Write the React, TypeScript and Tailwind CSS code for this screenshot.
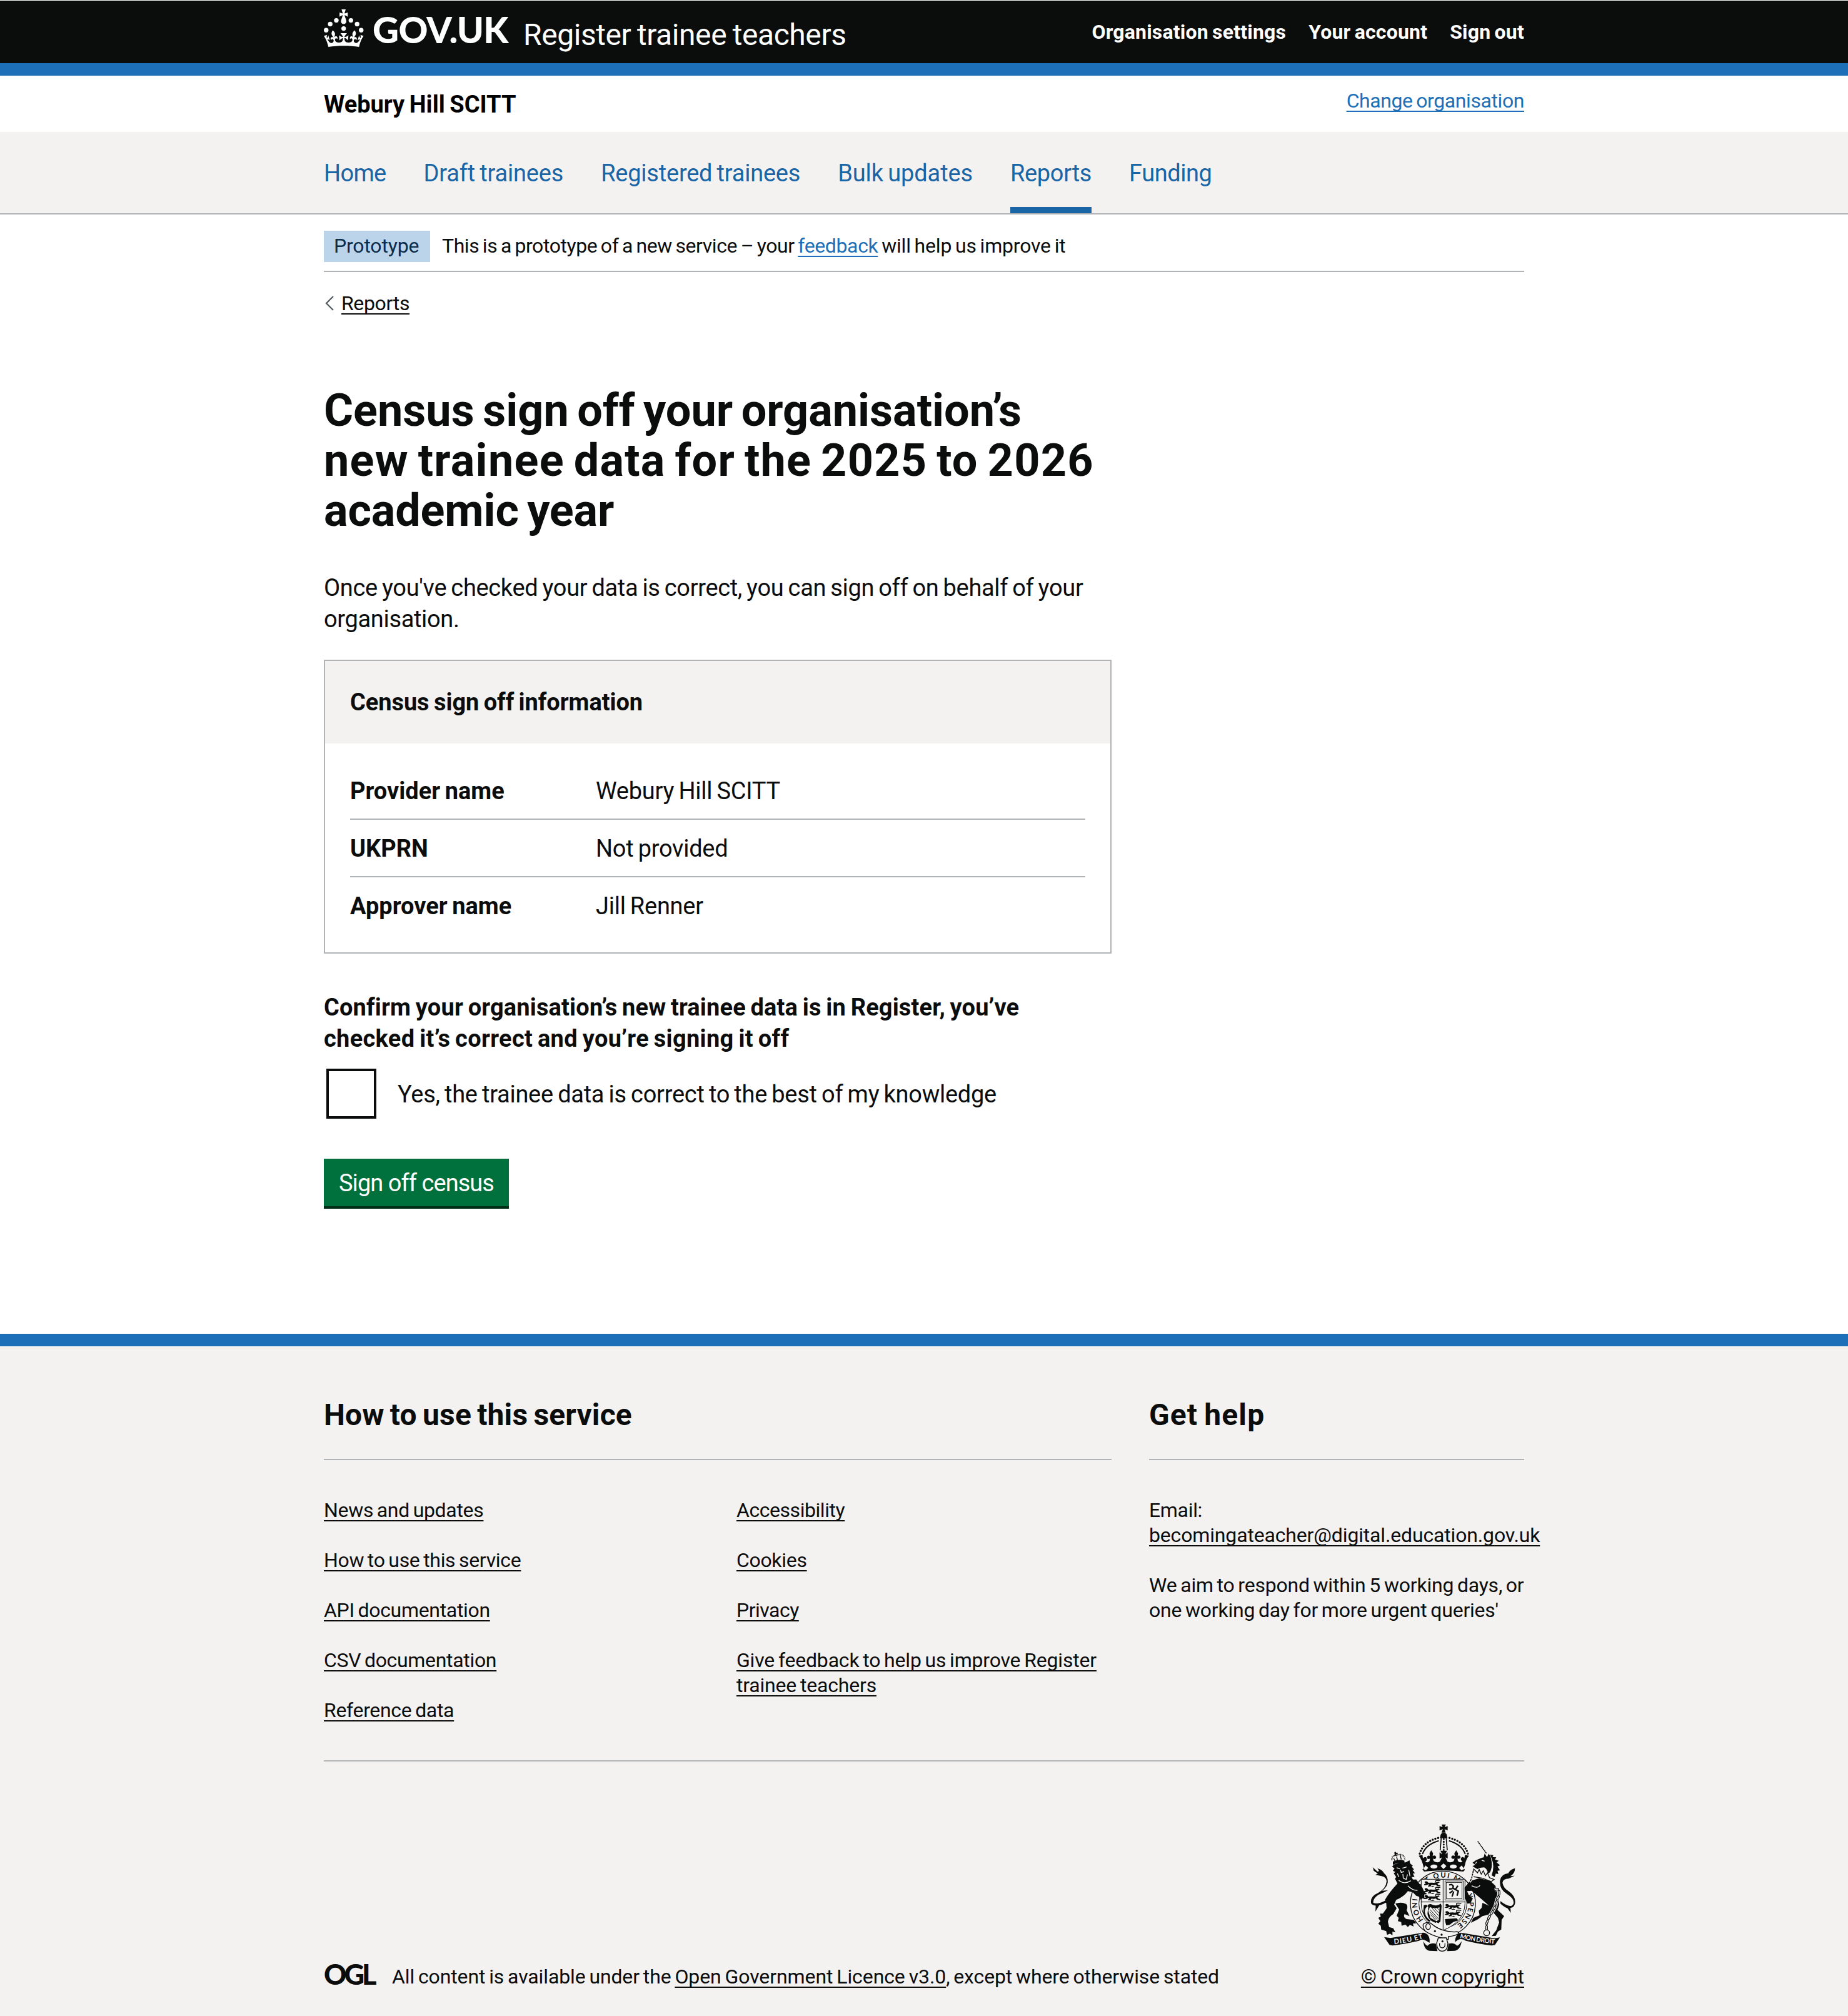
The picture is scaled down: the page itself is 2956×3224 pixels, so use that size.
import type { ReactNode } from "react";

const LINK = "underline decoration-[2px] underline-offset-[5px] [text-decoration-skip-ink:none]";

function Crown() {
  return (
    <svg viewBox="0 0 64 60" className="mt-[14px] h-[60px] w-[64px] shrink-0 fill-white" aria-hidden="true">
      <circle cx="20" cy="17.6" r="3.7" />
      <circle cx="10.2" cy="23.5" r="3.7" />
      <circle cx="3.7" cy="33.2" r="3.7" />
      <circle cx="31.7" cy="30.6" r="3.7" />
      <circle cx="43.3" cy="17.6" r="3.7" />
      <circle cx="53.2" cy="23.5" r="3.7" />
      <circle cx="59.7" cy="33.2" r="3.7" />
      <path d="M33.1,9.8c.2-.1.3-.3.5-.5l4.6,2.4v-6.8l-4.6,1.5c-.1-.2-.3-.3-.5-.5l1.9-5.9h-6.7l1.9,5.9c-.2.1-.3.3-.5.5l-4.6-1.5v6.8l4.6-2.4c.1.2.3.3.5.5l-2.6,8c-.9,2.8,1.2,5.7,4.1,5.7h0c3,0,5.1-2.9,4.1-5.7l-2.6-8ZM37,37.9s-3.4,3.8-4.1,6.1c2.2,0,4.2-.5,6.4-2.8l-.7,8.5c-2-2.8-4.4-4.1-5.7-3.8.1,3.1.5,6.7,5.8,7.2,3.7.3,6.7-1.5,7-3.8.4-2.6-2-4.3-3.7-1.6-1.4-4.5,2.4-6.1,4.9-3.2-1.9-4.5-1.8-7.7,2.4-10.9,3,4,2.6,7.3-1.2,11.1,2.4-1.3,6.2,0,4,4.6-1.2-2.8-3.7-2.2-4.2.2-.3,1.7.7,3.7,3,4.2,1.9.3,4.7-.9,7-5.9-1.3,0-2.4.7-3.9,1.7l2.4-8c.6,2.3,1.4,3.7,2.2,4.5.6-1.6.5-2.8,0-5.3l5,1.8c-2.6,3.6-5.2,8.7-7.3,17.5-7.4-1.1-15.7-1.7-24.5-1.7h0c-8.8,0-17.1.6-24.5,1.7-2.1-8.9-4.7-13.9-7.3-17.5l5-1.8c-.5,2.5-.6,3.7,0,5.3.8-.8,1.6-2.3,2.2-4.5l2.4,8c-1.5-1-2.6-1.7-3.9-1.7,2.3,5,5.2,6.2,7,5.9,2.3-.4,3.3-2.4,3-4.2-.5-2.4-3-3.1-4.2-.2-2.2-4.6,1.6-6,4-4.6-3.7-3.7-4.2-7.1-1.2-11.1,4.2,3.2,4.3,6.4,2.4,10.9,2.5-2.8,6.3-1.3,4.9,3.2-1.8-2.7-4.1-1-3.7,1.6.3,2.3,3.3,4.1,7,3.8,5.4-.5,5.7-4.2,5.8-7.2-1.3-.2-3.7,1-5.7,3.8l-.7-8.5c2.2,2.3,4.2,2.7,6.4,2.8-.7-2.3-4.1-6.1-4.1-6.1h10.6Z" />
    </svg>
  );
}

/* Small walking lion used in the quarters of the shield. */
function PassantLion({ x, y }: { x: number; y: number }) {
  return (
    <g transform={`translate(${x} ${y})`}>
      <path d="M4 3 Q10 -3 17 1 L23 7 Q36 5 50 7 L66 3 Q74 0 76 6 Q70 9 66 9 L68 16 L80 20 L80 24 L64 22 L58 16 Q46 20 38 16 L32 24 L20 25 L20 21 L27 18 L24 14 L12 19 L2 18 L2 14 L12 11 L6 9 Z" />
      <path d="M60 6 Q52 -4 64 -5 Q74 -5 80 -3" fill="none" stroke="#0b0c0c" strokeWidth="4" />
      <path d="M30 27 L44 22 L52 27 Z" />
    </g>
  );
}

function RoyalArms() {
  const ink = "#0b0c0c";
  const paper = "#f3f2f1";
  return (
    <svg viewBox="126 80 696 612" className="h-[204px] w-[232px]" fill={ink} aria-hidden="true">
      <defs>
        <path id="garter" d="M380 540 A123.4 123.4 0 1 1 530 570" />
        <path id="scrollLeft" d="M240 655 Q310 650 384 627" />
        <path id="scrollRight" d="M555 627 Q630 646 726 655" />
      </defs>

      {/* garter */}
      <ellipse cx="474" cy="462" rx="156" ry="156" fill={paper} stroke={ink} strokeWidth="4" />
      <ellipse cx="474" cy="462" rx="115" ry="116" fill="none" stroke={ink} strokeWidth="3" />
      <text fontFamily="Lato, sans-serif" fontSize="34" fontWeight="700">
        <textPath href="#garter" textLength="596">HONI SOIT QUI MAL Y PENSE</textPath>
      </text>

      {/* shield */}
      <path d="M370 345 H580 V462 Q578 548 475 590 Q372 548 370 462 Z" fill={paper} stroke={ink} strokeWidth="3" />
      <path d="M475 345 V588 M370 454 H580" fill="none" stroke={ink} strokeWidth="3" />
      <PassantLion x={382} y={355} />
      <PassantLion x={382} y={388} />
      <PassantLion x={382} y={421} />
      <PassantLion x={482} y={464} />
      <PassantLion x={482} y={498} />
      <path d="M484 536 L540 532 L548 542 L524 550 L506 564 L490 566 L486 550 Z" />
      <rect x="484" y="353" width="88" height="92" fill="none" stroke={ink} strokeWidth="2.5" />
      <rect x="490" y="360" width="76" height="78" fill="none" stroke={ink} strokeWidth="2.5" />
      <path d="M504 372 L516 370 L524 378 L522 388 L534 394 L546 376 M534 394 L548 402 L542 424 M520 390 L504 392 M522 400 L506 412 M526 404 L518 428" fill="none" stroke={ink} strokeWidth="7" />
      <path d="M382 470 Q396 464 402 474 Q384 486 388 506 Q392 530 416 544 L406 548 Q384 532 380 506 Z" />
      <path d="M404 480 Q396 464 416 464 Q446 478 464 462 L468 472 L462 548 L452 556 L440 548 L454 540 L458 480 Q430 488 412 478 L404 496 L414 530 L446 548 L440 554 Q402 542 400 508 Z" />
      <path d="M412 490 L452 534 M410 500 L448 540 M414 514 L440 542 M422 484 L454 520 M434 484 L456 508 M446 482 L457 494" fill="none" stroke={ink} strokeWidth="3" />

      {/* belt and buckle */}
      <path d="M380 560 Q400 544 424 562 Q460 594 530 598 Q548 594 552 604 Q536 616 500 620 L500 634 Q420 618 388 592 Q376 576 380 560 Z" fill={paper} stroke={ink} strokeWidth="4" />
      <ellipse cx="403" cy="572" rx="11" ry="14" fill="none" stroke={ink} strokeWidth="4" />
      <circle cx="436" cy="594" r="5" />
      <circle cx="468" cy="611" r="5" />
      <path d="M452 626 H490 L498 652 Q496 690 470 690 Q446 688 444 652 Z" fill={paper} stroke={ink} strokeWidth="4" />
      <path d="M458 652 Q456 674 471 674 Q486 674 484 652" fill="none" stroke={ink} strokeWidth="4" />
      <circle cx="472" cy="643" r="5" />

      {/* motto scroll */}
      <path d="M192 622 L222 627 L380 601 Q414 606 410 650 L394 640 Q372 628 360 640 Q290 656 232 663 L218 660 Q206 642 192 622 Z" />
      <path d="M748 624 L722 628 L560 601 Q532 610 532 646 L546 636 Q566 626 584 640 Q650 656 708 663 L724 660 Q736 642 748 624 Z" />
      <path d="M380 642 Q384 686 410 688 L448 690 L440 654 Q414 648 400 664 Q390 662 380 642 Z" />
      <path d="M564 642 Q558 684 532 688 L494 690 L502 654 Q528 648 542 664 Q552 662 564 642 Z" />
      <text fontFamily="Lato, sans-serif" fontSize="33" fontWeight="700" fill={paper}>
        <textPath href="#scrollLeft" textLength="142">DIEU ET</textPath>
      </text>
      <text fontFamily="Lato, sans-serif" fontSize="31" fontWeight="700" fill={paper}>
        <textPath href="#scrollRight" textLength="170">MON DROIT</textPath>
      </text>

      {/* crown above the shield */}
      <path d="M468 82 H488 L482 95 L497 90 V111 L482 105 L487 121 H467 L474 105 L458 111 V90 L473 95 Z" />
      <path d="M462 137 A16 16 0 1 1 494 137 L496 148 H460 Z" />
      <path d="M363 222 Q380 164 454 146" fill="none" stroke={ink} strokeWidth="10" strokeLinecap="round" strokeDasharray="0.1 13.4" />
      <path d="M594 222 Q576 164 503 146" fill="none" stroke={ink} strokeWidth="10" strokeLinecap="round" strokeDasharray="0.1 13.4" />
      <path d="M376 224 Q392 178 454 160 M581 224 Q565 178 503 160" fill="none" stroke={ink} strokeWidth="6" />
      <path d="M466 148 L461 206 M490 148 L495 206" fill="none" stroke={ink} strokeWidth="5" />
      <path d="M478 152 V206" fill="none" stroke={ink} strokeWidth="9" strokeLinecap="round" strokeDasharray="0.1 13" />
      <path d="M358 232 L376 228 L378 244 Q392 232 396 244 Q400 256 388 260 Q402 268 410 258 L412 246 Q398 252 398 238 Q402 228 411 234 L410 220 L418 206 L427 220 L425 234 Q436 226 442 238 Q440 252 426 246 L430 258 Q446 268 460 260 L470 240 L458 246 V216 L471 226 L462 208 H494 L485 226 L497 216 V246 L486 240 L496 260 Q512 268 526 258 L530 246 Q516 250 514 238 Q520 226 531 234 L529 220 L538 206 L547 220 L545 234 Q556 226 559 240 Q556 250 544 246 L546 258 Q556 268 568 260 Q556 252 562 242 Q570 234 577 244 L580 228 L599 232 Q584 250 580 276 L574 292 L580 300 L572 308 Q477 298 384 308 L376 298 L382 290 Q374 250 358 232 Z" />
      <ellipse cx="431" cy="284" rx="17" ry="10" fill={paper} />
      <ellipse cx="524" cy="284" rx="17" ry="10" fill={paper} />
      <path d="M477 269 L491 282 L477 296 L463 282 Z M391 279 L404 291 L392 302 L380 296 Z M564 279 L577 296 L563 302 L552 291 Z" fill={paper} />

      {/* lion supporter */}
      <path d="M246 212 L250 218 L257 217 V224 L251 224 L252 232 L240 232 L243 224 L240 218 Z" />
      <path d="M229 254 Q228 230 247 232 Q284 214 292 250" fill="none" stroke={ink} strokeWidth="6" strokeDasharray="4 3" />
      <path d="M234 260 Q262 246 290 256 L288 270 Q262 262 234 276 Z" />
      <path d="M252 236 L256 254 M270 230 L274 250 M238 244 L244 258" fill="none" stroke={ink} strokeWidth="4" />
      <path d="M230 284 L240 274 Q268 262 296 264 L314 254 L316 268 L330 280 L324 284 L336 298 L328 300 L340 316 L330 318 L338 334 L324 334 L330 346 L346 346 L376 386 L384 404 L398 416 L384 418 L386 440 L376 436 L368 444 L358 428 L346 424 L330 408 L306 402 Q286 430 250 444 L240 466 L252 484 L236 512 Q214 524 210 548 L216 574 L236 580 L246 600 L232 596 L232 614 L220 606 L206 612 L202 594 L178 586 L176 568 L164 558 L174 546 L164 530 L176 524 L172 510 L186 510 L204 484 L202 458 L196 444 Q216 408 256 366 L244 342 L250 334 L238 316 L246 310 L234 304 L242 294 Z" />
      <path d="M246 462 Q274 452 298 464 Q308 472 300 494 L314 522 L290 512 Q282 528 300 536 L334 540 L346 556 L330 558 L334 572 L316 564 L306 574 L294 562 L276 568 L274 550 L258 546 L262 530 L252 520 L264 490 Z" />
      <path d="M204 456 Q150 484 130 462 Q122 428 164 410 Q202 388 204 354 Q202 334 180 330 L150 324 L162 318 L142 304 L138 288 L160 308 L168 306 L160 292 Q184 300 192 316 Q212 332 209 362 Q204 386 182 400 L210 398 Q184 412 164 420 Q138 438 140 458 Q160 468 200 446 Z" />
      <path d="M152 466 L172 464 L150 500 Z" />
      <path d="M252 290 L268 294 M280 292 L300 286 M270 300 L274 312 L288 308 M282 320 L284 340 L298 346 L304 322 M256 318 L262 334 M310 300 L316 330 M262 350 Q290 372 320 352 M306 376 Q330 400 352 398" fill="none" stroke={paper} strokeWidth="4" />

      {/* unicorn supporter */}
      <path d="M641 163 L684 222" fill="none" stroke={ink} strokeWidth="5" strokeDasharray="7 2" />
      <path d="M616 266 L632 254 L660 242 L670 240 L674 222 L686 238 L694 222 L704 240 L708 262 Q712 286 700 312 L690 318 Q688 296 672 288 L652 290 L640 296 L628 290 L616 282 L630 276 Z" />
      <path d="M700 226 L716 230 L712 238 L730 240 L724 250 L742 256 L732 264 L748 278 L736 284 L748 302 L736 304 L740 320 L728 318 L722 334 L708 326 Q724 284 708 246 Z" />
      <path d="M622 296 L640 314 L648 298 L658 320 L668 304 L678 328 L688 314 L698 338 L720 346 L706 356 L664 340 L616 332 Z" fill={paper} stroke={ink} strokeWidth="4" />
      <path d="M604 354 L648 340 L700 352 L724 374 L744 412 L744 468 L736 492 L768 522 L756 540 L754 586 L738 596 L728 616 L708 618 L730 590 L744 552 L738 530 L712 500 L700 476 Q660 440 612 400 L590 402 L600 424 L618 436 L606 460 L592 462 L580 434 L578 386 L590 370 Z" />
      <path d="M620 304 L612 340 L600 360" fill="none" stroke={paper} strokeWidth="14" />
      <path d="M620 304 L612 340 L600 366" fill="none" stroke={ink} strokeWidth="5" strokeDasharray="10 4" />
      <path d="M664 458 L700 474 L712 494 L694 514 L664 522 L640 538 L608 554 L620 530 L650 518 L646 496 L660 482 Z" />
      <path d="M750 450 Q800 488 812 464 Q820 440 782 416 Q744 392 748 352 Q752 320 788 316 Q796 298 820 292 Q820 316 798 330 L818 328 L790 342 Q762 342 760 362 Q764 388 792 404 Q826 430 820 462 Q814 484 798 482 L800 506 L784 484 Q766 478 750 462 Z" />
      <path d="M724 396 Q744 384 744 410 Q744 430 734 440 L726 474 L712 500 L694 530 L684 556 L684 588" fill="none" stroke={paper} strokeWidth="18" />
      <path d="M724 396 Q744 384 744 410 Q744 430 734 440 L726 474 L712 500 L694 530 L684 556 L684 588" fill="none" stroke={ink} strokeWidth="12" strokeLinecap="round" strokeDasharray="14 12" />
      <path d="M724 396 Q744 384 744 410 Q744 430 734 440 L726 474 L712 500 L694 530 L684 556 L684 588" fill="none" stroke={paper} strokeWidth="5" strokeLinecap="round" strokeDasharray="14 12" />
      <circle cx="684" cy="602" r="14" fill={paper} stroke={ink} strokeWidth="4" />
      <path d="M636 262 L630 270 M660 254 L674 258 M612 376 Q640 392 652 374" fill="none" stroke={paper} strokeWidth="4" />
    </svg>
  );
}

function FooterLink({ children, className = "tracking-[-0.01em]" }: { children: ReactNode; className?: string }) {
  return (
    <li>
      <a className={`${LINK} ${className}`}>{children}</a>
    </li>
  );
}

function SummaryRow({ label, value, last = false }: { label: string; value: string; last?: boolean }) {
  return (
    <div className={last ? "flex pt-[21px] pb-[19px]" : "flex border-b-[2px] border-[#b1b4b6] pt-[21px] pb-[19px]"}>
      <dt className="w-[393px] font-bold tracking-[0em]">{label}</dt>
      <dd className="tracking-[-0.007em]">{value}</dd>
    </div>
  );
}

const NAV = [
  { label: "Home", style: "tracking-[-0.018em]" },
  { label: "Draft trainees", style: "tracking-[-0.005em]" },
  { label: "Registered trainees", style: "tracking-[-0.006em]" },
  { label: "Bulk updates", style: "tracking-[-0.003em]" },
  { label: "Reports", style: "border-b-[10px] border-[#1a65a6] tracking-[-0.009em]" },
  { label: "Funding", style: "tracking-[-0.012em]" },
];

export default function App() {
  return (
    <div className="h-[3224px] bg-white pt-px font-['Roboto',sans-serif] text-[32px] leading-[40px] text-[#0b0c0c] [word-spacing:-0.06em]">
      <header>
        <div className="h-[100px] bg-[#0b0c0c] text-white">
          <div className="mx-auto flex w-[1920px] items-start">
            <Crown />
            <span className="mt-[16px] ml-[14px] w-[241px] font-['Lato',sans-serif] text-[58px] leading-[60px] font-black tracking-[-0.011em]">
              GOV.UK
            </span>
            <span className="mt-[25px] text-[48px] leading-[60px] tracking-[-0.009em]">Register trainee teachers</span>
            <nav className="mt-[30px] ml-auto flex gap-[36px] font-bold tracking-[0.006em]">
              <a>Organisation settings</a>
              <a>Your account</a>
              <a>Sign out</a>
            </nav>
          </div>
        </div>
        <div className="h-5 bg-[#1d70b8]" />
        <div className="mx-auto flex h-[90px] w-[1920px] items-start justify-between pt-5">
          <span className="mt-px text-[38px] leading-[50px] font-bold tracking-[0em] text-black">Webury Hill SCITT</span>
          <a className={`${LINK} tracking-[-0.013em] text-[#1d70b8]`}>Change organisation</a>
        </div>
        <div className="border-b-[2px] border-[#b1b4b6] bg-[#f3f2f1]">
          <nav className="mx-auto flex h-[130px] w-[1920px] gap-[60px] text-[38px] leading-[50px] text-[#1a65a6]">
            {NAV.map((item) => (
              <a key={item.label} className={`h-full pt-[41px] ${item.style}`}>
                {item.label}
              </a>
            ))}
          </nav>
        </div>
      </header>

      <div className="mx-auto w-[1920px]">
        <div className="flex h-[92px] items-start border-b-[2px] border-[#b1b4b6] pt-[26px] leading-[48px]">
          <strong className="h-[50px] w-[170px] bg-[#bbd4ea] pl-4 font-normal tracking-[-0.006em] text-[#0c2d4a]">Prototype</strong>
          <p className="ml-[19px] tracking-[-0.0135em]">
            This is a prototype of a new service – your{" "}
            <a className={`${LINK} tracking-[-0.012em] text-[#1d70b8]`}>feedback</a>
            <span className="tracking-[-0.006em]"> will help us improve it</span>
          </p>
        </div>
        <a className="mt-[30px] flex items-start">
          <svg viewBox="0 0 28 40" className="h-10 w-7" fill="none" stroke="#505a5f" strokeWidth="2.2" aria-hidden="true">
            <path d="M15 9 L4 20 L15 31" />
          </svg>
          <span className={`${LINK} tracking-[-0.011em]`}>Reports</span>
        </a>
      </div>

      <main className="mx-auto mt-[112px] w-[1920px] text-[38px] leading-[50px]">
        <div className="w-[1260px]">
          <h1 className="text-[72px] leading-[80px] font-bold whitespace-nowrap [word-spacing:-0.06em]">
            <span className="block tracking-[0em]">Census sign off your organisation’s</span>
            <span className="block tracking-[0.0175em]">new trainee data for the 2025 to 2026</span>
            <span className="block tracking-[-0.002em]">academic year</span>
          </h1>
          <p className="mt-[58px] tracking-[-0.009em]">
            Once you've checked your data is correct, you can sign off on behalf of your
            <br />
            organisation.
          </p>

          <section className="mt-[40px] border-[2px] border-[#b1b4b6]">
            <h2 className="h-[132px] bg-[#f3f2f1] px-10 pt-[41px] font-bold tracking-[-0.002em]">Census sign off information</h2>
            <dl className="px-10 py-[30px]">
              <SummaryRow label="Provider name" value="Webury Hill SCITT" />
              <SummaryRow label="UKPRN" value="Not provided" />
              <SummaryRow label="Approver name" value="Jill Renner" last />
            </dl>
          </section>

          <form>
            <p className="mt-[61px] font-bold">
              <span className="tracking-[0.004em]">Confirm your organisation’s new trainee data is in Register, you’ve</span>
              <br />
              <span className="tracking-[0.008em]">checked it’s correct and you’re signing it off</span>
            </p>
            <label className="mt-[23px] flex items-start">
              <span className="ml-1 h-20 w-20 border-[4px] border-[#0b0c0c] bg-white" />
              <span className="mt-4 ml-[34px] tracking-[-0.007em]">Yes, the trainee data is correct to the best of my knowledge</span>
            </label>
            <button
              type="button"
              className="mt-16 h-[80px] w-[296px] border-b-[4px] border-[#002d18] bg-[#00703c] pt-[2px] text-center tracking-[-0.025em] text-white"
            >
              Sign off census
            </button>
          </form>
        </div>
      </main>

      <footer className="mt-[200px] h-[1091px] border-t-[20px] border-[#1d70b8] bg-[#f3f2f1] pt-20">
        <div className="mx-auto w-[1920px]">
          <div className="flex gap-[60px] border-b-[2px] border-[#b1b4b6] pb-[60px]">
            <section className="w-[1260px]">
              <h2 className="border-b-[2px] border-[#b1b4b6] pb-10 text-[48px] leading-[60px] font-bold tracking-[0.003em] [word-spacing:-0.06em]">
                How to use this service
              </h2>
              <div className="mt-[60px] grid grid-cols-2 gap-[60px]">
                <ul className="flex flex-col gap-10">
                  <FooterLink>News and updates</FooterLink>
                  <FooterLink>How to use this service</FooterLink>
                  <FooterLink>API documentation</FooterLink>
                  <FooterLink>CSV documentation</FooterLink>
                  <FooterLink>Reference data</FooterLink>
                </ul>
                <ul className="flex flex-col gap-10">
                  <FooterLink className="tracking-[-0.014em]">Accessibility</FooterLink>
                  <FooterLink>Cookies</FooterLink>
                  <FooterLink className="tracking-[-0.016em]">Privacy</FooterLink>
                  <FooterLink className="tracking-[-0.006em]">
                    Give feedback to help us improve Register
                    <br />
                    trainee teachers
                  </FooterLink>
                </ul>
              </div>
            </section>
            <section className="w-[600px] whitespace-nowrap">
              <h2 className="border-b-[2px] border-[#b1b4b6] pb-10 text-[48px] leading-[60px] font-bold tracking-[0.023em] [word-spacing:-0.06em]">
                Get help
              </h2>
              <p className="mt-[60px]">
                <span className="tracking-[-0.01em]">Email:</span>
                <br />
                <a className={`${LINK} tracking-[-0.005em]`}>becomingateacher@digital.education.gov.uk</a>
              </p>
              <p className="mt-10 tracking-[-0.007em]">
                We aim to respond within 5 working days, or
                <br />
                one working day for more urgent queries'
              </p>
            </section>
          </div>

          <div className="flex items-end pt-[100px]">
            <span className="mb-[-1px] w-[109px] font-['Lato',sans-serif] text-[45px] leading-[50px] font-black tracking-[-0.09em]">OGL</span>
            <p className="tracking-[-0.004em]">
              All content is available under the <a className={`${LINK} tracking-[-0.003em]`}>Open Government Licence v3.0</a>, except
              where otherwise stated
            </p>
            <div className="ml-auto flex flex-col items-end">
              <div className="mr-[14px] mb-5">
                <RoyalArms />
              </div>
              <a className={`${LINK} tracking-[0em]`}>© Crown copyright</a>
            </div>
          </div>
        </div>
      </footer>
    </div>
  );
}
